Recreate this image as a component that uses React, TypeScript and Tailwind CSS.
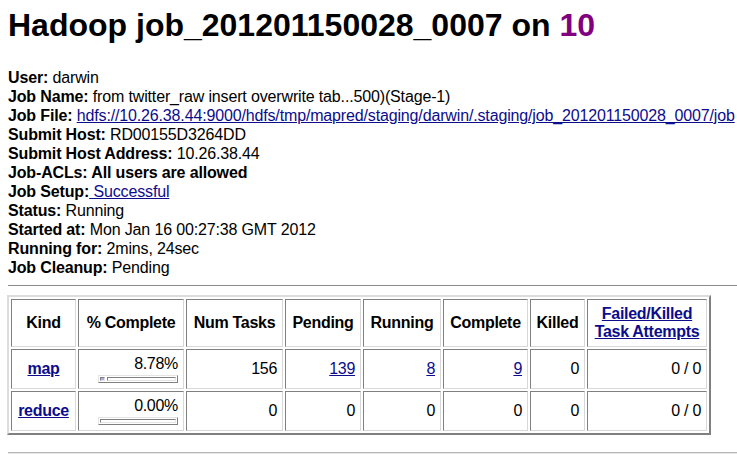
const link = "text-[#0c0c8c] underline";

type Row = {
  kind: string;
  pct: string;
  filled: number;
  num: string;
  pending: string;
  running: string;
  complete: string;
  killed: string;
  failed: string;
  linked: boolean;
};

const rows: Row[] = [
  { kind: "map", pct: "8.78%", filled: 5, num: "156", pending: "139", running: "8", complete: "9", killed: "0", failed: "0 / 0", linked: true },
  { kind: "reduce", pct: "0.00%", filled: 0, num: "0", pending: "0", running: "0", complete: "0", killed: "0", failed: "0 / 0", linked: false },
];

const cell = "border border-t-[#808080] border-l-[#808080] border-b-[#d8d8d8] border-r-[#d8d8d8] px-[5px] py-[5px]";

function Bar({ filled }: { filled: number }) {
  return (
    <div className="mt-[2px] ml-auto flex h-[8px] w-[80px] gap-[2px] border border-t-[#e4e4e4] border-l-[#e4e4e4] border-b-[#808080] border-r-[#808080] p-px">
      {filled > 0 && (
        <div
          className="border border-t-[#808080] border-l-[#808080] border-b-[#e4e4e4] border-r-[#e4e4e4] bg-[#aaaaff]"
          style={{ width: filled }}
        />
      )}
      <div className="flex-1 border border-t-[#808080] border-l-[#808080] border-b-[#e4e4e4] border-r-[#e4e4e4] bg-white" />
    </div>
  );
}

function Info({ label, children }: { label: string; children?: React.ReactNode }) {
  return (
    <div>
      <b>{label}</b> {children}
    </div>
  );
}

export default function App() {
  return (
    <div className="h-[454px] w-[737px] overflow-hidden bg-white pl-2 font-['Liberation_Sans',Arial,sans-serif] text-black">
      <h1 className="whitespace-nowrap pt-[7px] text-[32px] font-bold leading-[37px]">
        Hadoop job_201201150028_0007 on <span className="text-[#800080]">10</span>
      </h1>

      <div className="mt-[24px] whitespace-nowrap text-[16px] leading-[19px] tracking-[-0.15px]">
        <Info label="User:">darwin</Info>
        <Info label="Job Name:">from twitter_raw insert overwrite tab...500)(Stage-1)</Info>
        <Info label="Job File:">
          <a className={link}>hdfs://10.26.38.44:9000/hdfs/tmp/mapred/staging/darwin/.staging/job_201201150028_0007/job</a>
        </Info>
        <Info label="Submit Host:">RD00155D3264DD</Info>
        <Info label="Submit Host Address:">10.26.38.44</Info>
        <div className="font-bold">Job-ACLs: All users are allowed</div>
        <div>
          <b>Job Setup:</b>
          <a className={link}> Successful</a>
        </div>
        <Info label="Status:">Running</Info>
        <Info label="Started at:">Mon Jan 16 00:27:38 GMT 2012</Info>
        <Info label="Running for:">2mins, 24sec</Info>
        <Info label="Job Cleanup:">Pending</Info>
      </div>

      <div className="mt-[8px] h-px bg-[#8c8c8c]" />

      <table className="mt-[9px] ml-[-1px] table-fixed border-separate border-spacing-[2px] border-2 border-t-[#dcdcdc] border-l-[#dcdcdc] border-b-[#808080] border-r-[#808080] text-[16px] leading-[18px] tracking-[-0.3px]">
        <thead>
          <tr className="whitespace-nowrap font-bold">
            <th className={`${cell} w-[65px] text-center`}>Kind</th>
            <th className={`${cell} w-[106px] text-center`}>% Complete</th>
            <th className={`${cell} w-[97px] text-center`}>Num Tasks</th>
            <th className={`${cell} w-[76px] text-center`}>Pending</th>
            <th className={`${cell} w-[78px] text-center`}>Running</th>
            <th className={`${cell} w-[85px] text-center`}>Complete</th>
            <th className={`${cell} w-[55px] text-center`}>Killed</th>
            <th className={`${cell} w-[120px] text-center`}>
              <a className={link}>
                Failed/Killed
                <br />
                Task Attempts
              </a>
            </th>
          </tr>
        </thead>
        <tbody>
          {rows.map((r) => (
            <tr key={r.kind}>
              <td className={`${cell} text-center align-middle`}>
                <a className={`${link} font-bold`}>{r.kind}</a>
              </td>
              <td className={`${cell} text-right`}>
                <div>{r.pct}</div>
                <Bar filled={r.filled} />
              </td>
              <td className={`${cell} text-right`}>{r.num}</td>
              <td className={`${cell} text-right`}>
                {r.linked ? <a className={link}>{r.pending}</a> : r.pending}
              </td>
              <td className={`${cell} text-right`}>
                {r.linked ? <a className={link}>{r.running}</a> : r.running}
              </td>
              <td className={`${cell} text-right`}>
                {r.linked ? <a className={link}>{r.complete}</a> : r.complete}
              </td>
              <td className={`${cell} text-right`}>{r.killed}</td>
              <td className={`${cell} text-right`}>{r.failed}</td>
            </tr>
          ))}
        </tbody>
      </table>

      <div className="mt-[17px] h-[4px] border-t border-t-[#b8b8b8] bg-[#e6e6e6]" />
    </div>
  );
}
